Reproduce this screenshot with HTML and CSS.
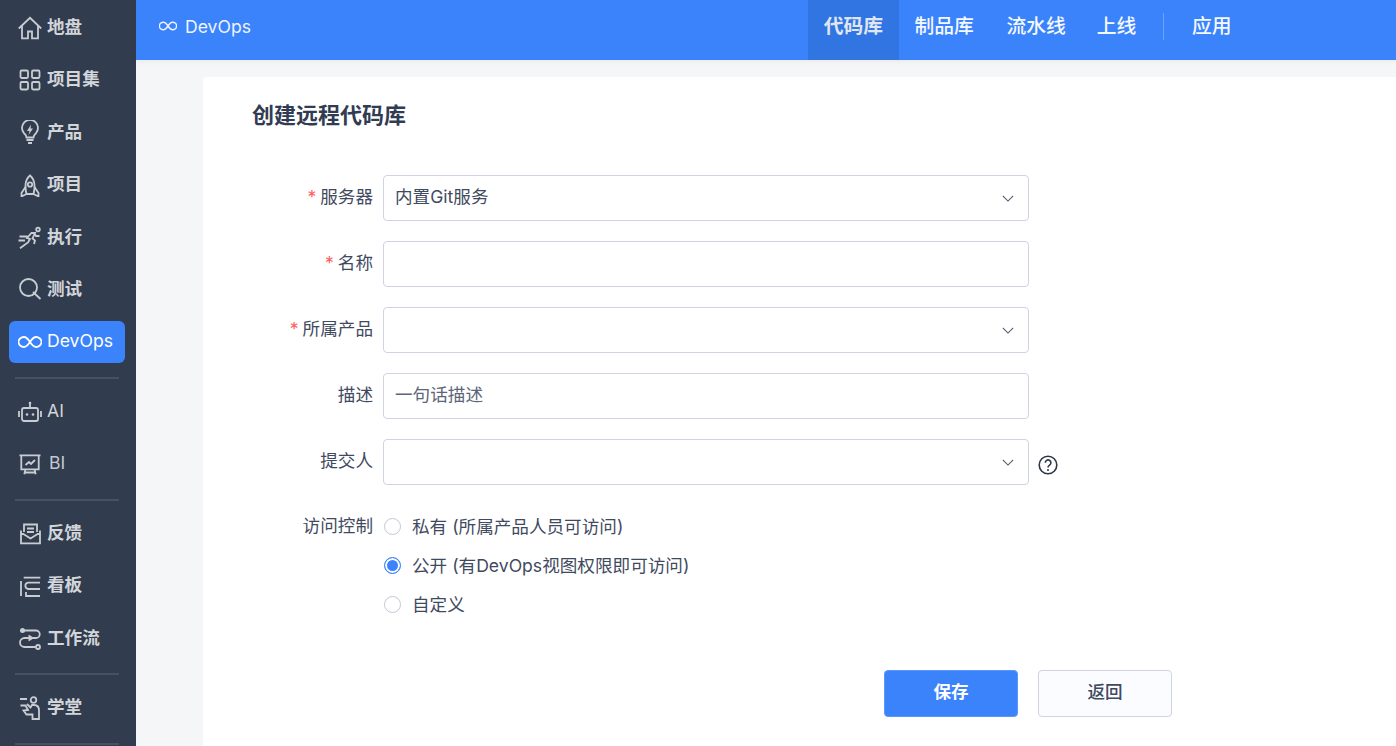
FILE: index.html
```html
<!DOCTYPE html>
<html lang="zh-CN">
<head>
<meta charset="utf-8">
<title>创建远程代码库</title>
<link rel="stylesheet" href="styles.css">
</head>
<body>
<div class="app">
  <aside class="sidebar">
    <div class="group">
      <a class="item"><svg class="ico" viewBox="0 0 24 24"><path d="M.8 12.500 12 1.800l11.200 10.700M4 10v12.300h6v-6.800h4v6.800h6V10"/></svg><span>地盘</span></a>
      <a class="item"><svg class="ico" viewBox="0 0 24 24"><rect x="2.500" y="2.500" width="7.500" height="7.500" rx="1.200"/><rect x="14" y="2.500" width="7.500" height="7.500" rx="1.200"/><rect x="2.500" y="14" width="7.500" height="7.500" rx="1.200"/><rect x="14" y="14" width="7.500" height="7.500" rx="1.200"/></svg><span>项目集</span></a>
      <a class="item"><svg class="ico" viewBox="0 0 24 24"><path d="M8.500 17.500c0-2-1-3-2.500-4.300a8 8 0 1 1 12 0c-1.500 1.300-2.500 2.300-2.500 4.300zM8.500 20h7M10 23h4"/><path class="fill" d="M13 4.500 9 11h2.500L10.500 15 15 8.500h-2.500z"/></svg><span>产品</span></a>
      <a class="item"><svg class="ico" viewBox="0 0 24 24"><path d="M12 2.500c3 2.500 4.500 6 4.500 10 0 3 0 5.500-1 8.500h-7c-1-3-1-5.500-1-8.500 0-4 1.500-7.500 4.500-10z"/><circle cx="12" cy="11.500" r="2.200"/><path d="M7.500 14 3.500 20v3.500l5-2.500M16.500 14l4 6v3.500l-5-2.500"/></svg><span>项目</span></a>
      <a class="item"><svg class="ico" viewBox="0 0 24 24"><circle cx="20" cy="4.500" r="1.800"/><path d="M2 23.300 10 17.500l2-3.500-3-1 4.500-5H17l-2.500 5.500 2.500 2-1 3.500M16.500 8.500 18 11h3.500M.5 15.500h6.500M1.500 11.500h8"/></svg><span>执行</span></a>
      <a class="item"><svg class="ico" viewBox="0 0 24 24"><circle cx="10.500" cy="10.500" r="8.500"/><path d="M15 15l7.500 7"/></svg><span>测试</span></a>
      <a class="item active"><svg class="ico" viewBox="0 0 24 24"><path d="M12 12c-2-3-3.700-5-6-5a5.500 5 0 0 0 0 10c2.300 0 4-2 6-5s3.700-5 6-5a5.500 5 0 0 1 0 10c-2.300 0-4-2-6-5z"/></svg><span class="latin">DevOps</span></a>
    </div>
    <hr class="rule">
    <div class="group">
      <a class="item"><svg class="ico" viewBox="0 0 24 24"><rect x="4" y="9" width="16" height="13" rx="2"/><path d="M12 9V5M1 12v6M23 12v6"/><circle class="fill" cx="12" cy="4" r="1.300"/><circle class="fill" cx="9" cy="15.500" r="1.300"/><circle class="fill" cx="15" cy="15.500" r="1.300"/></svg><span class="latin">AI</span></a>
      <a class="item"><svg class="ico" viewBox="0 0 24 24"><path d="M1.500 3.300h21M3.300 3.300v14h17.400v-14M7.500 17.300l-1.200 5M16.500 17.300l1.200 5M7 20.500h10M7.500 13l3.500-3 2 2 4-4"/></svg><span class="latin bi">BI</span></a>
    </div>
    <hr class="rule">
    <div class="group">
      <a class="item"><svg class="ico" viewBox="0 0 24 24"><path d="M6 11V3.500h13V11M3 9.500v12.800h19V9.500M3 11.500l9.500 6 9.500-6M9 7.500h7M9 11h7"/></svg><span>反馈</span></a>
      <a class="item"><svg class="ico" viewBox="0 0 24 24"><path d="M5.700 3.700h16.600M3 7v15M22 8.700H10a3.200 3.200 0 0 0 0 6.300h12M22 22H8v-4"/></svg><span>看板</span></a>
      <a class="item"><svg class="ico" viewBox="0 0 24 24"><circle class="fill" cx="4.500" cy="4.500" r="2.500"/><path d="M6 4.500h12a3.700 3.700 0 0 1 0 7.500H6.500a4.500 4.500 0 0 0 0 9h11"/><circle cx="20" cy="21" r="2"/><path d="M10.500 9.500l4 2.500-4 2.500"/></svg><span>工作流</span></a>
    </div>
    <hr class="rule">
    <div class="group">
      <a class="item"><svg class="ico" viewBox="0 0 24 24"><circle cx="15.500" cy="4" r="2.800"/><path d="M2 3h7M2.500 9.500h5l2.500 4.500-4.500.5 3 4h6v4.500h6.500v-8.500c0-3.500-2-5.500-5-5.500h-2l-1.500 2.500-3.500-3.500"/></svg><span>学堂</span></a>
    </div>
    <hr class="rule">
  </aside>
  <div class="main">
    <header class="topbar">
      <div class="brand"><svg class="brand-ico" viewBox="0 0 24 24"><path d="M12 12c-2-3-3.700-5-6-5a5.500 5 0 0 0 0 10c2.300 0 4-2 6-5s3.700-5 6-5a5.500 5 0 0 1 0 10c-2.300 0-4-2-6-5z"/></svg><span>DevOps</span></div>
      <nav class="nav">
        <a class="tab current">代码库</a>
        <a class="tab">制品库</a>
        <a class="tab tight">流水线</a>
        <a class="tab">上线</a>
        <i class="nav-sep"></i>
        <a class="tab">应用</a>
      </nav>
    </header>
    <main class="canvas">
      <section class="card">
        <h1 class="title">创建远程代码库</h1>
        <form class="form">
          <div class="row">
            <label class="label"><b class="req">*</b>服务器</label>
            <div class="control select"><span>内置Git服务</span><svg class="chev" viewBox="0 0 14 8"><path d="M1 1l6 6 6-6"/></svg></div>
          </div>
          <div class="row">
            <label class="label"><b class="req">*</b>名称</label>
            <div class="control"></div>
          </div>
          <div class="row">
            <label class="label"><b class="req">*</b>所属产品</label>
            <div class="control select"><span></span><svg class="chev" viewBox="0 0 14 8"><path d="M1 1l6 6 6-6"/></svg></div>
          </div>
          <div class="row">
            <label class="label">描述</label>
            <div class="control placeholder"><span>一句话描述</span></div>
          </div>
          <div class="row">
            <label class="label">提交人</label>
            <div class="control select"><span></span><svg class="chev" viewBox="0 0 14 8"><path d="M1 1l6 6 6-6"/></svg></div>
            <svg class="help" viewBox="0 0 20 20"><circle cx="10" cy="10" r="8.800"/><path d="M7.300 7.800a2.800 2.800 0 1 1 4.300 2.300c-1 .7-1.600 1.200-1.600 2.300"/><circle class="dot" cx="10" cy="15" r="1"/></svg>
          </div>
          <div class="row radios-row">
            <label class="label">访问控制</label>
            <div class="radios">
              <div class="radio"><i class="dot-box"></i><span>私有 (所属产品人员可访问)</span></div>
              <div class="radio"><i class="dot-box on"></i><span>公开 (有DevOps视图权限即可访问)</span></div>
              <div class="radio"><i class="dot-box"></i><span>自定义</span></div>
            </div>
          </div>
          <div class="actions">
            <a class="btn primary">保存</a>
            <a class="btn">返回</a>
          </div>
        </form>
      </section>
    </main>
  </div>
</div>
</body>
</html>
```
FILE: styles.css
```css
* { box-sizing: border-box; }
html, body { margin: 0; height: 100%; overflow: hidden; }
body {
  font-family: Inter, "Noto Sans CJK SC", sans-serif;
  font-size: 17.600px;
  color: #313c52;
  background: #f5f6f8;
}
.app { display: flex; height: 746px; overflow: hidden; }

.sidebar {
  width: 136px;
  flex: none;
  background: #313c4e;
  padding: 6.500px 11px 0 9px;
  display: flex;
  flex-direction: column;
}
.group { display: flex; flex-direction: column; gap: 10.400px; }
.item {
  height: 42px;
  flex: none;
  display: flex;
  align-items: center;
  gap: 5px;
  padding-left: 9px;
  border-radius: 6px;
  color: #d2d5da;
  font-size: 17.600px;
  font-weight: 700;
  line-height: 42px;
}
.item span { margin-bottom: 1px; }
.item .latin { font-weight: 400; }
.item .bi { margin-left: 2px; color: #c4c8cf; }
.item.active { background: #3a83fb; color: #fff; }
.ico {
  width: 24px;
  height: 24px;
  flex: none;
  fill: none;
  stroke: #c9cdd3;
  stroke-width: 1.800;
}
.active .ico { stroke: #fff; }
.ico .fill { fill: #c9cdd3; stroke: none; }
.rule {
  height: 2px;
  border: 0;
  margin: 14px 6px 11.500px;
  background: #465165;
  flex: none;
  width: 104px;
}

.main { flex: 1; min-width: 0; display: flex; flex-direction: column; }
.topbar {
  height: 60px;
  flex: none;
  background: #3a83fb;
  color: #fff;
  display: flex;
  justify-content: space-between;
  padding-left: 23px;
  position: relative;
  box-shadow: 0 1px 6px rgba(0, 0, 0, .06);
}
.brand { display: flex; align-items: center; gap: 8px; font-size: 17.600px; color: #eef4ff; padding-bottom: 8px; }
.brand-ico { width: 18px; height: 18px; fill: none; stroke: currentColor; stroke-width: 2; }
.nav { display: flex; align-items: stretch; margin-right: 148px; font-size: 19.800px; font-weight: 500; }
.tab { padding: 0 16.400px 12px; display: flex; align-items: center; color: #f4f8ff; }
.tab.tight { padding-right: 14.400px; }
.tab.current { background: #3175e3; color: #dfe6f2; font-weight: 700; padding: 0 16px 12px; }
.tab.current + .tab { padding-left: 15.400px; }
.nav-sep { width: 1px; height: 27px; margin: 13px 12px 0 10px; background: #6ea3fb; }

.canvas { flex: 1; padding: 17px 0 0 67px; min-height: 0; }
.card {
  height: 100%;
  background: #fff;
  border-radius: 4px 0 0 0;
  padding: 24px 0 0 49px;
}
.title { margin: 0; font-size: 22px; font-weight: 700; line-height: 28px; color: #313c52; }
.form { margin-top: 46px; }
.row { display: flex; align-items: flex-start; margin-bottom: 20px; }
.label {
  width: 121px;
  flex: none;
  text-align: right;
  line-height: 44px;
  color: #3f4a60;
  display: block;
}
.req { color: #ff5d5d; font-weight: 400; margin-right: 4px; }
.control {
  width: 646px;
  height: 46px;
  margin-left: 10px;
  flex: none;
  border: 1px solid #d0d3e2;
  border-radius: 4px;
  background: #fff;
  padding: 0 11px;
  display: flex;
  align-items: center;
  justify-content: space-between;
  color: #3f4a60;
  line-height: 42px;
}
.control > span { margin-bottom: 2px; }
.placeholder { color: #5b667a; }
.chev { width: 12px; height: 7px; fill: none; stroke: #4a5568; stroke-width: 1.200; margin-right: 3px; }
.help { width: 20px; height: 20px; margin: 16px 0 0 9px; fill: none; stroke: #2c3648; stroke-width: 1.600; }
.help .dot { fill: #2c3648; stroke: none; }

.radios-row { margin-bottom: 0; padding-top: 2px; }
.radios { margin-left: 10px; display: flex; flex-direction: column; }
.radio { display: flex; align-items: center; height: 39px; gap: 11px; padding-left: 1px; color: #3f4a60; }
.radio span { margin-bottom: 2px; }
.radios-row .label { line-height: 38px; }
.dot-box {
  width: 17px;
  height: 17px;
  border: 1px solid #c3c7d2;
  border-radius: 50%;
  background: #fff;
  flex: none;
}
.dot-box.on {
  border-color: #3a83fb;
  background: #3a83fb;
  box-shadow: inset 0 0 0 2px #fff;
}

.actions { display: flex; gap: 20px; margin-top: 46px; padding-left: 632px; }
.btn {
  width: 134px;
  height: 47px;
  border: 1px solid #d0d3e2;
  border-radius: 4px;
  background: #fbfcff;
  display: flex;
  align-items: center;
  justify-content: center;
  color: #3f4a60;
  font-weight: 500;
  padding-bottom: 6px;
}
.btn.primary { background: #3a83fb; border-color: #5a97fb; color: #fff; font-weight: 700; }
```
